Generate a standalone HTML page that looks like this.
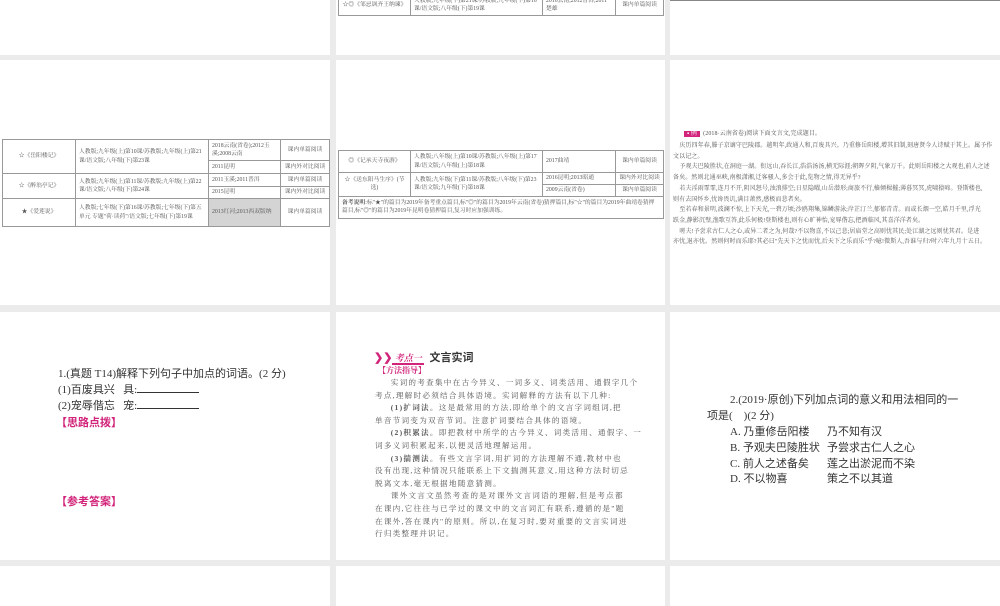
<!DOCTYPE html>
<html><head><meta charset="utf-8"><style>
*{margin:0;padding:0;box-sizing:border-box}
body{width:1000px;height:600px;background:#ebebeb;position:relative;overflow:hidden;font-family:"Liberation Serif","Noto Serif CJK SC",serif;color:#333}
.s{position:absolute;background:#fff;overflow:hidden}
table{border-collapse:collapse;position:absolute;font-size:5.8px;color:#555;table-layout:fixed}
td{border:1px solid #999;padding:1px 3px;line-height:8.5px;vertical-align:middle}
.c{text-align:center}
.t{position:absolute;font-size:6px;color:#555;line-height:10.7px;white-space:nowrap;letter-spacing:0.1px}
.p{position:absolute;font-size:7.6px;line-height:12.6px;color:#555;letter-spacing:1.25px;white-space:nowrap}
.q{position:absolute;font-size:11px;color:#333;white-space:nowrap;font-family:"Liberation Serif","Noto Sans CJK SC",serif}
.pk,.q.pk{color:#d1247a;font-weight:bold}
.u{display:inline-block;width:62px;border-bottom:1px solid #333;height:10px;vertical-align:baseline}
</style></head><body>
<!-- row 1 -->
<div class="s" style="left:0;top:0;width:330px;height:55px"></div>
<div class="s" style="left:336px;top:0;width:329px;height:55px">
<table style="left:2px;top:-6px;width:325px;height:22px">
<colgroup><col style="width:72px"><col style="width:132px"><col style="width:73px"><col style="width:48px"></colgroup>
<tr><td class="c">☆◎《邹忌讽齐王纳谏》</td><td>人教版;九年级(下)第21课/苏教版;九年级(下)第16课/语文版;八年级(下)第19课</td><td>2016云南;2012普洱;2011楚雄</td><td class="c">课内单篇阅读</td></tr></table>
</div>
<div class="s" style="left:670px;top:0;width:330px;height:55px"><div style="position:absolute;left:0;top:0;width:330px;height:1px;background:#888"></div></div>
<!-- row 2 -->
<div class="s" style="left:0;top:60px;width:330px;height:245px">
<table style="left:2px;top:79px;width:327px;height:87px">
<colgroup><col style="width:73px"><col style="width:133px"><col style="width:72px"><col style="width:49px"></colgroup>
<tr style="height:21px"><td class="c" rowspan="2">☆《岳阳楼记》</td><td rowspan="2">人教版;九年级(上)第10课/苏教版;九年级(上)第21课/语文版;八年级(下)第23课</td><td>2018云南(省卷);2012玉溪;2008云南</td><td class="c">课内单篇阅读</td></tr>
<tr style="height:13px"><td>2011昆明</td><td class="c">课内外对比阅读</td></tr>
<tr style="height:13px"><td class="c" rowspan="2">☆《醉翁亭记》</td><td rowspan="2">人教版;九年级(上)第11课/苏教版;九年级(上)第22课/语文版;八年级(下)第24课</td><td>2011玉溪;2011普洱</td><td class="c">课内单篇阅读</td></tr>
<tr style="height:12px"><td>2015昆明</td><td class="c">课内外对比阅读</td></tr>
<tr style="height:28px"><td class="c">★《爱莲说》</td><td>人教版;七年级(下)第16课/苏教版;七年级(下)第五单元 专题"荷·读荷"/语文版;七年级(下)第19课</td><td style="background:#d4d4d4">2013红河;2013西双版纳</td><td class="c">课内单篇阅读</td></tr>
</table></div>
<div class="s" style="left:336px;top:60px;width:329px;height:245px">
<table style="left:2px;top:90px;width:325px;height:67px">
<colgroup><col style="width:72px"><col style="width:132px"><col style="width:73px"><col style="width:48px"></colgroup>
<tr style="height:22px"><td class="c">◎《记承天寺夜游》</td><td>人教版;八年级(上)第10课/苏教版;八年级(上)第17课/语文版;八年级(上)第18课</td><td>2017曲靖</td><td class="c">课内单篇阅读</td></tr>
<tr style="height:11px"><td class="c" rowspan="2">☆《送东阳马生序》(节选)</td><td rowspan="2">人教版;九年级(下)第11课/苏教版;八年级(下)第23课/语文版;九年级(下)第18课</td><td>2016昆明;2013昭通</td><td class="c">课内外对比阅读</td></tr>
<tr style="height:12px"><td>2009云南(省卷)</td><td class="c">课内单篇阅读</td></tr>
<tr style="height:22px"><td colspan="4"><b>备考说明</b>:标"★"的篇目为2019年备考重点篇目,标"◎"的篇目为2019年云南(省卷)猜押篇目,标"☆"的篇目为2019年曲靖卷猜押篇目,标"◎"的篇目为2019年昆明卷猜押篇目,复习时应加强训练。</td></tr>
</table></div>
<div class="s" style="left:670px;top:60px;width:330px;height:245px">
<div class="t" style="left:14px;top:69px"><span style="background:#d1247a;color:#fff;padding:0 3px">▪ 例</span>&nbsp; (2018·云南省卷)阅读下面文言文,完成题目。</div>
<div class="t" style="left:3px;top:81px">&nbsp;&nbsp;&nbsp;&nbsp;庆历四年春,滕子京谪守巴陵郡。越明年,政通人和,百废具兴。乃重修岳阳楼,增其旧制,刻唐贤今人诗赋于其上。属予作<br>文以记之。<br>&nbsp;&nbsp;&nbsp;&nbsp;予观夫巴陵胜状,在洞庭一湖。衔远山,吞长江,浩浩汤汤,横无际涯;朝晖夕阴,气象万千。此则岳阳楼之大观也,前人之述<br>备矣。然则北通巫峡,南极潇湘,迁客骚人,多会于此,览物之情,得无异乎?<br>&nbsp;&nbsp;&nbsp;&nbsp;若夫淫雨霏霏,连月不开,阴风怒号,浊浪排空;日星隐曜,山岳潜形;商旅不行,樯倾楫摧;薄暮冥冥,虎啸猿啼。登斯楼也,<br>则有去国怀乡,忧谗畏讥,满目萧然,感极而悲者矣。<br>&nbsp;&nbsp;&nbsp;&nbsp;至若春和景明,波澜不惊,上下天光,一碧万顷;沙鸥翔集,锦鳞游泳;岸芷汀兰,郁郁青青。而或长烟一空,皓月千里,浮光<br>跃金,静影沉璧,渔歌互答,此乐何极!登斯楼也,则有心旷神怡,宠辱偕忘,把酒临风,其喜洋洋者矣。<br>&nbsp;&nbsp;&nbsp;&nbsp;嗟夫!予尝求古仁人之心,或异二者之为,何哉?不以物喜,不以己悲;居庙堂之高则忧其民;处江湖之远则忧其君。是进<br>亦忧,退亦忧。然则何时而乐耶?其必曰"先天下之忧而忧,后天下之乐而乐"乎?噫!微斯人,吾谁与归?时六年九月十五日。</div>
</div>
<!-- row 3 -->
<div class="s" style="left:0;top:312px;width:330px;height:248px">
<div class="q" style="left:58px;top:53px">1.(真题 T14)解释下列句子中加点的词语。(2 分)</div>
<div class="q" style="left:58px;top:69px">(1)百废具兴&nbsp;&nbsp;&nbsp;具:<span class="u"></span></div>
<div class="q" style="left:58px;top:85px">(2)宠辱偕忘&nbsp;&nbsp;&nbsp;宠:<span class="u"></span></div>
<div class="q pk" style="left:56px;top:102px">【思路点拨】</div>
<div class="q pk" style="left:56px;top:181px">【参考答案】</div>
</div>
<div class="s" style="left:336px;top:312px;width:329px;height:248px">
<div style="position:absolute;left:38px;top:37px;font-size:11px;white-space:nowrap"><span style="color:#d1247a;font-weight:bold">❯❯</span><span style="color:#d1247a;font-style:italic;font-weight:bold;font-size:9px;border-bottom:2px solid #d1247a"> 考点一 </span>&nbsp;&nbsp;<b style="font-family:'Noto Sans CJK SC',sans-serif;font-size:11px">文言实词</b></div>
<div class="pk" style="position:absolute;left:42px;top:53px;font-size:8px">【方法指导】</div>
<div class="p" style="left:39px;top:65px">&nbsp;&nbsp;&nbsp;&nbsp;&nbsp;实词的考查集中在古今异义、一词多义、词类活用、通假字几个<br>考点,理解时必须结合具体语境。实词解释的方法有以下几种:<br>&nbsp;&nbsp;&nbsp;&nbsp;&nbsp;<b>(1)扩词法。</b>这是最常用的方法,即给单个的文言字词组词,把<br>单音节词变为双音节词。注意扩词要结合具体的语境。<br>&nbsp;&nbsp;&nbsp;&nbsp;&nbsp;<b>(2)积累法。</b>即把教材中所学的古今异义、词类活用、通假字、一<br>词多义词积累起来,以便灵活地理解运用。<br>&nbsp;&nbsp;&nbsp;&nbsp;&nbsp;<b>(3)揣测法。</b>有些文言字词,用扩词的方法理解不通,教材中也<br>没有出现,这种情况只能联系上下文揣测其意义,用这种方法时切忌<br>脱离文本,毫无根据地随意猜测。<br>&nbsp;&nbsp;&nbsp;&nbsp;&nbsp;课外文言文虽然考查的是对课外文言词语的理解,但是考点都<br>在课内,它往往与已学过的课文中的文言词汇有联系,遵循的是"题<br>在课外,答在课内"的原则。所以,在复习时,要对重要的文言实词进<br>行归类整理并识记。</div>
</div>
<div class="s" style="left:670px;top:312px;width:330px;height:248px">
<div class="q" style="left:60px;top:79px">2.(2019·原创)下列加点词的意义和用法相同的一</div>
<div class="q" style="left:37px;top:95px">项是(&nbsp;&nbsp;&nbsp;&nbsp;)(2 分)</div>
<div class="q" style="left:60px;top:111px">A. 乃重修岳阳楼</div><div class="q" style="left:157px;top:111px">乃不知有汉</div>
<div class="q" style="left:60px;top:127px">B. 予观夫巴陵胜状</div><div class="q" style="left:157px;top:127px">予尝求古仁人之心</div>
<div class="q" style="left:60px;top:143px">C. 前人之述备矣</div><div class="q" style="left:157px;top:143px">莲之出淤泥而不染</div>
<div class="q" style="left:60px;top:158px">D. 不以物喜</div><div class="q" style="left:157px;top:158px">策之不以其道</div>
</div>
<!-- row 4 -->
<div class="s" style="left:0;top:566px;width:330px;height:40px"></div>
<div class="s" style="left:336px;top:566px;width:329px;height:40px"></div>
<div class="s" style="left:670px;top:566px;width:330px;height:40px"></div>
</body></html>
